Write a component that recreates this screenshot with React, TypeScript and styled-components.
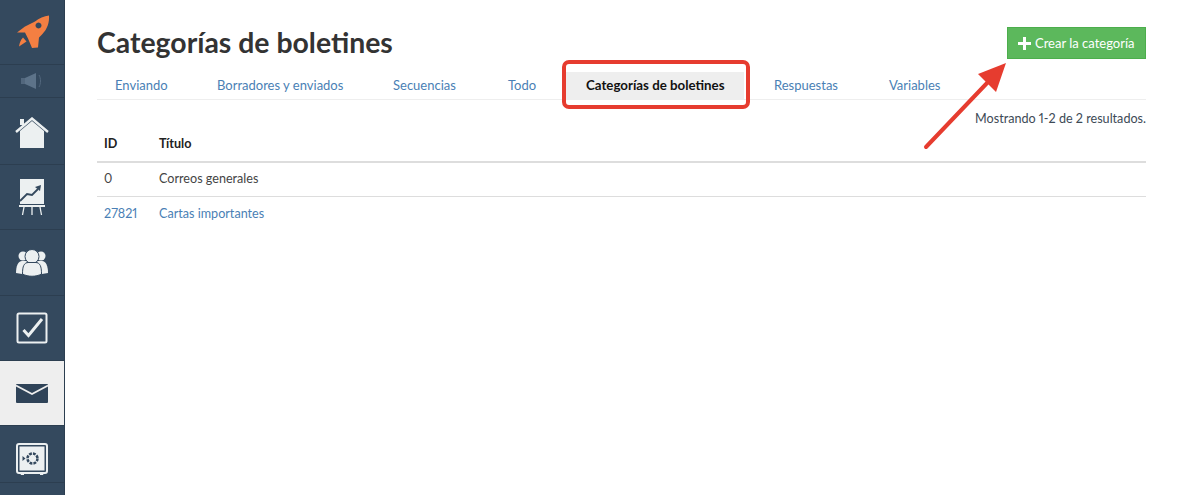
import React from "react";
import styled, { createGlobalStyle } from "styled-components";

const Global = createGlobalStyle`
  html, body { margin: 0; padding: 0; background: #fff; height: 100%; overflow: hidden; }
  #root { height: 100%; }
  * { box-sizing: border-box; }
`;

const Page = styled.div`
  position: relative;
  display: flex;
  width: 1199px;
  height: 495px;
  overflow: hidden;
  font-family: "Lato", "Liberation Sans", sans-serif;
  font-variant-numeric: proportional-nums;
  color: #3c3c3c;
  background: #fff;
`;

const Sidebar = styled.nav`
  flex: 0 0 65px;
  width: 65px;
  height: 495px;
  display: flex;
  flex-direction: column;
  background: #34495e;
  border-right: 1px solid #2c3e50;
`;

const NavItem = styled.div<{ $h: number; $active?: boolean; $pt?: number }>`
  flex: 0 0 ${(p) => p.$h}px;
  display: flex;
  align-items: center;
  justify-content: center;
  padding-top: ${(p) => p.$pt ?? 0}px;
  background: ${(p) => (p.$active ? "#eeeeee" : "transparent")};
  border-bottom: 1px solid #2c3e50;
`;

const Main = styled.main`
  flex: 1;
  padding: 27px 53px 0 32px;
  min-width: 0;
`;

const Header = styled.header`
  display: flex;
  align-items: flex-start;
  justify-content: space-between;
  height: 39px;
`;

const Title = styled.h1`
  margin: 0;
  font-size: 28.4px;
  line-height: 30px;
  font-weight: 700;
  color: #333;
`;

const CreateButton = styled.button`
  display: flex;
  align-items: center;
  gap: 4px;
  width: 139px;
  height: 32px;
  padding: 0 0 0 10px;
  border: 1px solid #4cae4c;
  background: #5cb85c;
  color: #fff;
  font: inherit;
  font-size: 13px;
`;

const Tabs = styled.ul`
  display: grid;
  grid-template-columns: 88px 162px 101px 64px 174px 101px 87px;
  justify-content: start;
  gap: 14px;
  margin: 0;
  padding: 0;
  list-style: none;
  height: 34px;
  border-bottom: 1px solid #eee;
`;

const Tab = styled.li<{ $active?: boolean }>`
  display: flex;
  align-items: center;
  height: 27px;
  margin: ${(p) => (p.$active ? "6px -2px 0" : "6px 0 0")};
  padding: ${(p) => (p.$active ? "0 0 2px 20px" : "0 0 2px 18px")};
  font-size: ${(p) => (p.$active ? 13.3 : 13)}px;
  font-weight: ${(p) => (p.$active ? 700 : 400)};
  white-space: nowrap;
  color: ${(p) => (p.$active ? "#111" : "#4a7fb5")};
  background: ${(p) => (p.$active ? "#eee" : "transparent")};
`;

const Summary = styled.div`
  margin-top: 10px;
  height: 17px;
  text-align: right;
  font-size: 12.6px;
  line-height: 17px;
  color: #3d4a56;
`;

const Row = styled.div<{ $head?: boolean }>`
  display: grid;
  grid-template-columns: 55px 1fr;
  align-items: center;
  height: ${(p) => (p.$head ? 36 : 34)}px;
  padding: 0 0 2px 7px;
  font-size: 12.6px;
  font-weight: ${(p) => (p.$head ? 700 : 400)};
  color: ${(p) => (p.$head ? "#222" : "#444")};
  border-bottom: ${(p) => (p.$head ? "2px solid #ddd" : "1px solid #ddd")};
`;

const LastRow = styled(Row)`
  border-bottom: none;
  color: #4a7fb5;
`;

const Highlight = styled.div`
  position: absolute;
  left: 562px;
  top: 60px;
  width: 188px;
  height: 49px;
  border: 4px solid #e63c2f;
  border-radius: 7px;
`;

const Arrow = styled.svg`
  position: absolute;
  left: 920px;
  top: 60px;
`;

const Icon = styled.svg`
  display: block;
`;

const Rocket = () => (
  <Icon width="36" height="36" viewBox="0 0 36 36">
    <path
      fill="#f47f42"
      fillRule="evenodd"
      d="M35 1.500C35.500 8 33.500 15 28 20.500L25 23.500 24 33.500 18 34 14 24.500 11 18.500 3 18.500 11 12.500 21 7.500C25 4 30 2 35 1.500ZM24.500 8.500a3 3 0 1 0 .01 0Z"
    />
    <path fill="#f47f42" d="M9 23.500L12.500 27.500 5 32.500C5.500 29 6.500 26 9 23.500Z" />
  </Icon>
);

const Speaker = () => (
  <Icon width="22" height="16" viewBox="0 0 22 16">
    <rect x="0" y="5" width="4" height="6" fill="#52677d" />
    <path fill="#5d7389" d="M4 5l11-5v16L4 11z" />
    <path fill="none" stroke="#52677d" strokeWidth="1" d="M18 2c2 3 2 9 0 12" />
  </Icon>
);

const Home = () => (
  <Icon width="34" height="32" viewBox="0 0 34 32">
    <path fill="#ecf0f1" d="M5 14L17 4l12 10v17H5z" />
    <rect x="5" y="2" width="4" height="6" fill="#ecf0f1" />
    <path fill="none" stroke="#ecf0f1" strokeWidth="2.400" d="M1 15L17 1.500l16 13.500" />
  </Icon>
);

const Chart = () => (
  <Icon width="26" height="37" viewBox="0 0 26 37">
    <rect x="1" y="0" width="24" height="25" fill="#ecf0f1" />
    <path fill="none" stroke="#34495e" strokeWidth="1.800" d="M1 22l7-7 5 1 6-6" />
    <path fill="#34495e" d="M16 8l6-2-1 6z" />
    <rect x="0" y="26" width="26" height="2" fill="#ecf0f1" />
    <path fill="none" stroke="#ecf0f1" strokeWidth="1.300" d="M5 28l-1.500 8M13 28v8M21 28l1.500 8" />
  </Icon>
);

const People = () => (
  <Icon width="34" height="28" viewBox="0 0 34 28">
    <g fill="#ecf0f1">
      <circle cx="8" cy="7" r="4.500" />
      <circle cx="26" cy="7" r="4.500" />
      <path d="M1 24C1 17 3 12 7 12h5L7 25Z" />
      <path d="M33 24C33 17 31 12 27 12h-5l5 13Z" />
    </g>
    <circle cx="17" cy="7.500" r="7" fill="#ecf0f1" stroke="#34495e" />
    <path fill="#ecf0f1" stroke="#34495e" d="M7.500 25C7.500 17 9 14 13 13.500h8C25 14 26.500 17 26.500 25 21 28 13 28 7.500 25Z" />
  </Icon>
);

const Check = () => (
  <Icon width="32" height="32" viewBox="0 0 32 32">
    <rect x="1.500" y="1.500" width="29" height="29" rx="1.500" fill="none" stroke="#ecf0f1" strokeWidth="2" />
    <path fill="none" stroke="#ecf0f1" strokeWidth="3" d="M7.500 18l5 5.500L26 7" />
  </Icon>
);

const Mail = () => (
  <Icon width="32" height="19" viewBox="0 0 32 19">
    <rect width="32" height="19" rx="1" fill="#2f4358" />
    <path fill="none" stroke="#eee" strokeWidth="1.800" d="M0 1.500L16 10 32 1.500" />
  </Icon>
);

const Safe = () => (
  <Icon width="32" height="33" viewBox="0 0 32 33">
    <rect x="1" y="1" width="30" height="29" rx="2" fill="none" stroke="#ecf0f1" strokeWidth="2" />
    <rect x="3.500" y="3.500" width="25" height="24" fill="#ecf0f1" />
    <path d="M4 30h4v2H5zM24 30h4l-1 2h-3z" fill="#ecf0f1" />
    <circle cx="16.500" cy="15.500" r="5" fill="none" stroke="#34495e" strokeWidth="2.500" strokeDasharray="2.800 1.100" />
    <path d="M6.500 13l3 2.500L6.500 18z" fill="#34495e" />
  </Icon>
);

const Plus = () => (
  <Icon width="13" height="13" viewBox="0 0 13 13">
    <path fill="#fff" d="M5 0h3v5h5v3H8v5H5V8H0V5h5z" />
  </Icon>
);

const tabs = ["Enviando", "Borradores y enviados", "Secuencias", "Todo", "Categorías de boletines", "Respuestas", "Variables"];

export default function App() {
  return (
    <Page>
      <Global />
      <Sidebar>
        <NavItem $h={65}><Rocket /></NavItem>
        <NavItem $h={33}><Speaker /></NavItem>
        <NavItem $h={67} $pt={3}><Home /></NavItem>
        <NavItem $h={65}><Chart /></NavItem>
        <NavItem $h={66}><People /></NavItem>
        <NavItem $h={65}><Check /></NavItem>
        <NavItem $h={65} $active><Mail /></NavItem>
        <NavItem $h={57} $pt={11}><Safe /></NavItem>
      </Sidebar>
      <Main>
        <Header>
          <Title>Categorías de boletines</Title>
          <CreateButton><Plus />Crear la categoría</CreateButton>
        </Header>
        <Tabs>
          {tabs.map((t) => (
            <Tab key={t} $active={t === "Categorías de boletines"}>{t}</Tab>
          ))}
        </Tabs>
        <Summary>Mostrando 1-2 de 2 resultados.</Summary>
        <Row $head><span>ID</span><span>Título</span></Row>
        <Row><span>0</span><span>Correos generales</span></Row>
        <LastRow><span>27821</span><span>Cartas importantes</span></LastRow>
      </Main>
      <Highlight />
      <Arrow width="100" height="95" viewBox="0 0 100 95">
        <path fill="none" stroke="#e63c2f" strokeWidth="4" strokeLinecap="round" d="M6 87L68 22" />
        <path fill="#e63c2f" d="M86 3L58 14 76 32z" />
      </Arrow>
    </Page>
  );
}
